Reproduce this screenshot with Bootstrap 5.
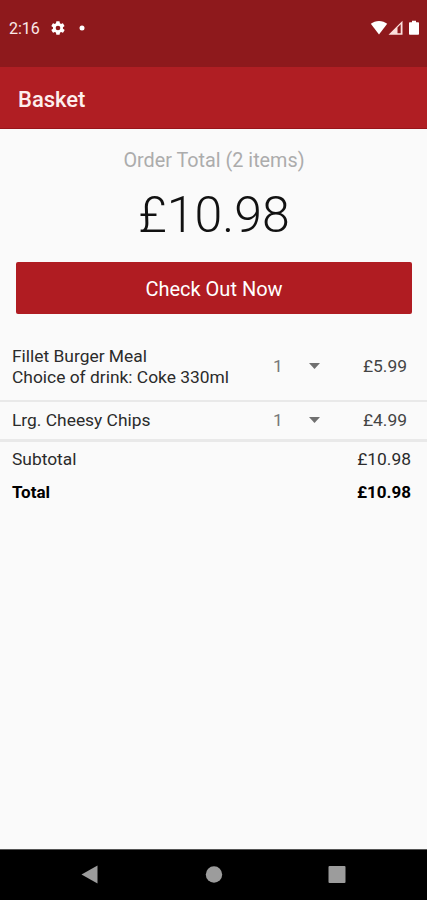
<!DOCTYPE html>
<html lang="en">
<head>
<meta charset="utf-8">
<meta name="viewport" content="width=device-width, initial-scale=1">
<title>Basket</title>
<link href="https://cdn.jsdelivr.net/npm/bootstrap@5.3.0/dist/css/bootstrap.min.css" rel="stylesheet">
<style>
body{font-family:Roboto,sans-serif;background:#fafafa;color:#2b2b2b;height:900px;overflow:hidden;font-size:17.4px;line-height:21px}
.status-bar{height:67px;background:#8e191c;color:#fbe9e9;padding:0 7px 12px 9px;font-size:16px}
.clock{width:41px;padding-top:1px}
.dot{margin-left:13px}
.app-bar{height:62px;background:#b01e23;border-bottom:1px solid #98151a;padding:4px 18px 0}
.app-title{font-size:22px;font-weight:500;line-height:28px;color:#fdeeee}
.order-caption{font-size:19.8px;line-height:24px;color:#acacac;margin-top:20px;padding-left:1px}
.order-sum{font-size:50px;line-height:60px;font-weight:300;color:#111;margin-top:12px;padding-left:1px}
.checkout{height:52px;margin:17px 15px 0 16px;background:#b01c22;color:#fff;border-radius:2px;font-size:20px;border:0;padding:1px 0 0}
.checkout:hover{background:#98151a;color:#fff}
.basket-line{padding:0 20px 0 12px;border-bottom:2px solid #e9e9e9}
.line-a{height:69px;margin-top:19px}
.line-b{height:40px;border-bottom-width:3px}
.qty{width:10px;color:#777}
.qty-arrow{margin-left:26px;margin-bottom:2px}
.price{width:87px;color:#444}
.sum-row{height:33px;padding:1px 16px 0 12px}
.sum-total{font-size:17px}
.nav-keys{height:51px;background:#000;border-top:1px solid #555}
</style>
</head>
<body class="d-flex flex-column">
<div class="status-bar d-flex align-items-center flex-shrink-0">
  <span class="clock">2:16</span>
  <svg class="gear" width="16" height="16" viewBox="0 0 24 24"><path fill="#fff" fill-rule="evenodd" d="M19.4 13a7.500 7.500 0 0 0 0-2l2.100-1.700a.5.5 0 0 0 .1-.6l-2-3.500a.5.5 0 0 0-.6-.2l-2.500 1a7.300 7.300 0 0 0-1.700-1l-.4-2.600a.5.5 0 0 0-.5-.4h-4a.5.5 0 0 0-.5.4L9 5a7.700 7.700 0 0 0-1.700 1l-2.500-1a.5.5 0 0 0-.6.2l-2 3.500a.5.5 0 0 0 .1.600L4.500 11a8 8 0 0 0 0 2l-2.200 1.700a.5.5 0 0 0-.1.600l2 3.500c.1.200.4.300.6.200l2.500-1c.5.400 1.100.7 1.700 1l.4 2.600c0 .2.200.4.500.4h4c.3 0 .5-.2.500-.4L15 19a7.300 7.300 0 0 0 1.700-1l2.500 1c.2.100.5 0 .6-.2l2-3.500a.5.5 0 0 0-.1-.6zM12 15.500a3.500 3.500 0 1 1 0-7 3.500 3.500 0 0 1 0 7z"/></svg>
  <svg class="dot" width="6" height="6" viewBox="0 0 6 6"><circle cx="3" cy="3" r="2.500" fill="#fff"/></svg>
  <svg class="ms-auto" width="50" height="16" viewBox="0 0 50 16"><path fill="#fff" d="M.8 3.800C5-.1 13-.1 17.200 3.800L9 14.600z"/><path fill="#fbe0dc" fill-rule="evenodd" d="M18.500 14.800 32.500.8v14zM27.500 7.500v5.800h3.200V4.300z"/><path fill="#fff" d="M39.800 2.300h2.200V.8h4v1.500h2.200q.8 0 .8.800v10.900q0 .8-.8.800h-8.400q-.8 0-.8-.8V3.100q0-.8.8-.8z"/></svg>
</div>
<header class="app-bar d-flex align-items-center flex-shrink-0"><h1 class="app-title mb-0">Basket</h1></header>
<main class="flex-grow-1 d-flex flex-column">
  <div class="order-caption text-center">Order Total (2 items)</div>
  <div class="order-sum text-center">£10.98</div>
  <button type="button" class="btn checkout">Check Out Now</button>
  <div class="basket-line line-a d-flex align-items-center">
    <div class="flex-grow-1"><div>Fillet Burger Meal</div><div>Choice of drink: Coke 330ml</div></div>
    <span class="qty">1</span>
    <svg class="qty-arrow" width="11" height="6" viewBox="0 0 11 6"><path fill="#707070" d="M0 0h11L5.500 6z"/></svg>
    <span class="price text-end">£5.99</span>
  </div>
  <div class="basket-line line-b d-flex align-items-center">
    <div class="flex-grow-1">Lrg. Cheesy Chips</div>
    <span class="qty">1</span>
    <svg class="qty-arrow" width="11" height="6" viewBox="0 0 11 6"><path fill="#707070" d="M0 0h11L5.500 6z"/></svg>
    <span class="price text-end">£4.99</span>
  </div>
  <div class="sum-row d-flex align-items-center justify-content-between"><span>Subtotal</span><span>£10.98</span></div>
  <div class="sum-row sum-total d-flex align-items-center justify-content-between fw-bold text-black"><span>Total</span><span>£10.98</span></div>
</main>
<nav class="nav-keys flex-shrink-0">
  <svg class="d-block" width="427" height="50" viewBox="0 0 427 50"><g fill="#9c9c9c"><path d="M81.500 24.500 97.500 15.500v18z"/><circle cx="214" cy="24.500" r="8.200"/><rect x="328.500" y="16" width="17" height="17" rx="1"/></g></svg>
</nav>
<script src="https://cdn.jsdelivr.net/npm/bootstrap@5.3.0/dist/js/bootstrap.bundle.min.js"></script>
</body>
</html>
